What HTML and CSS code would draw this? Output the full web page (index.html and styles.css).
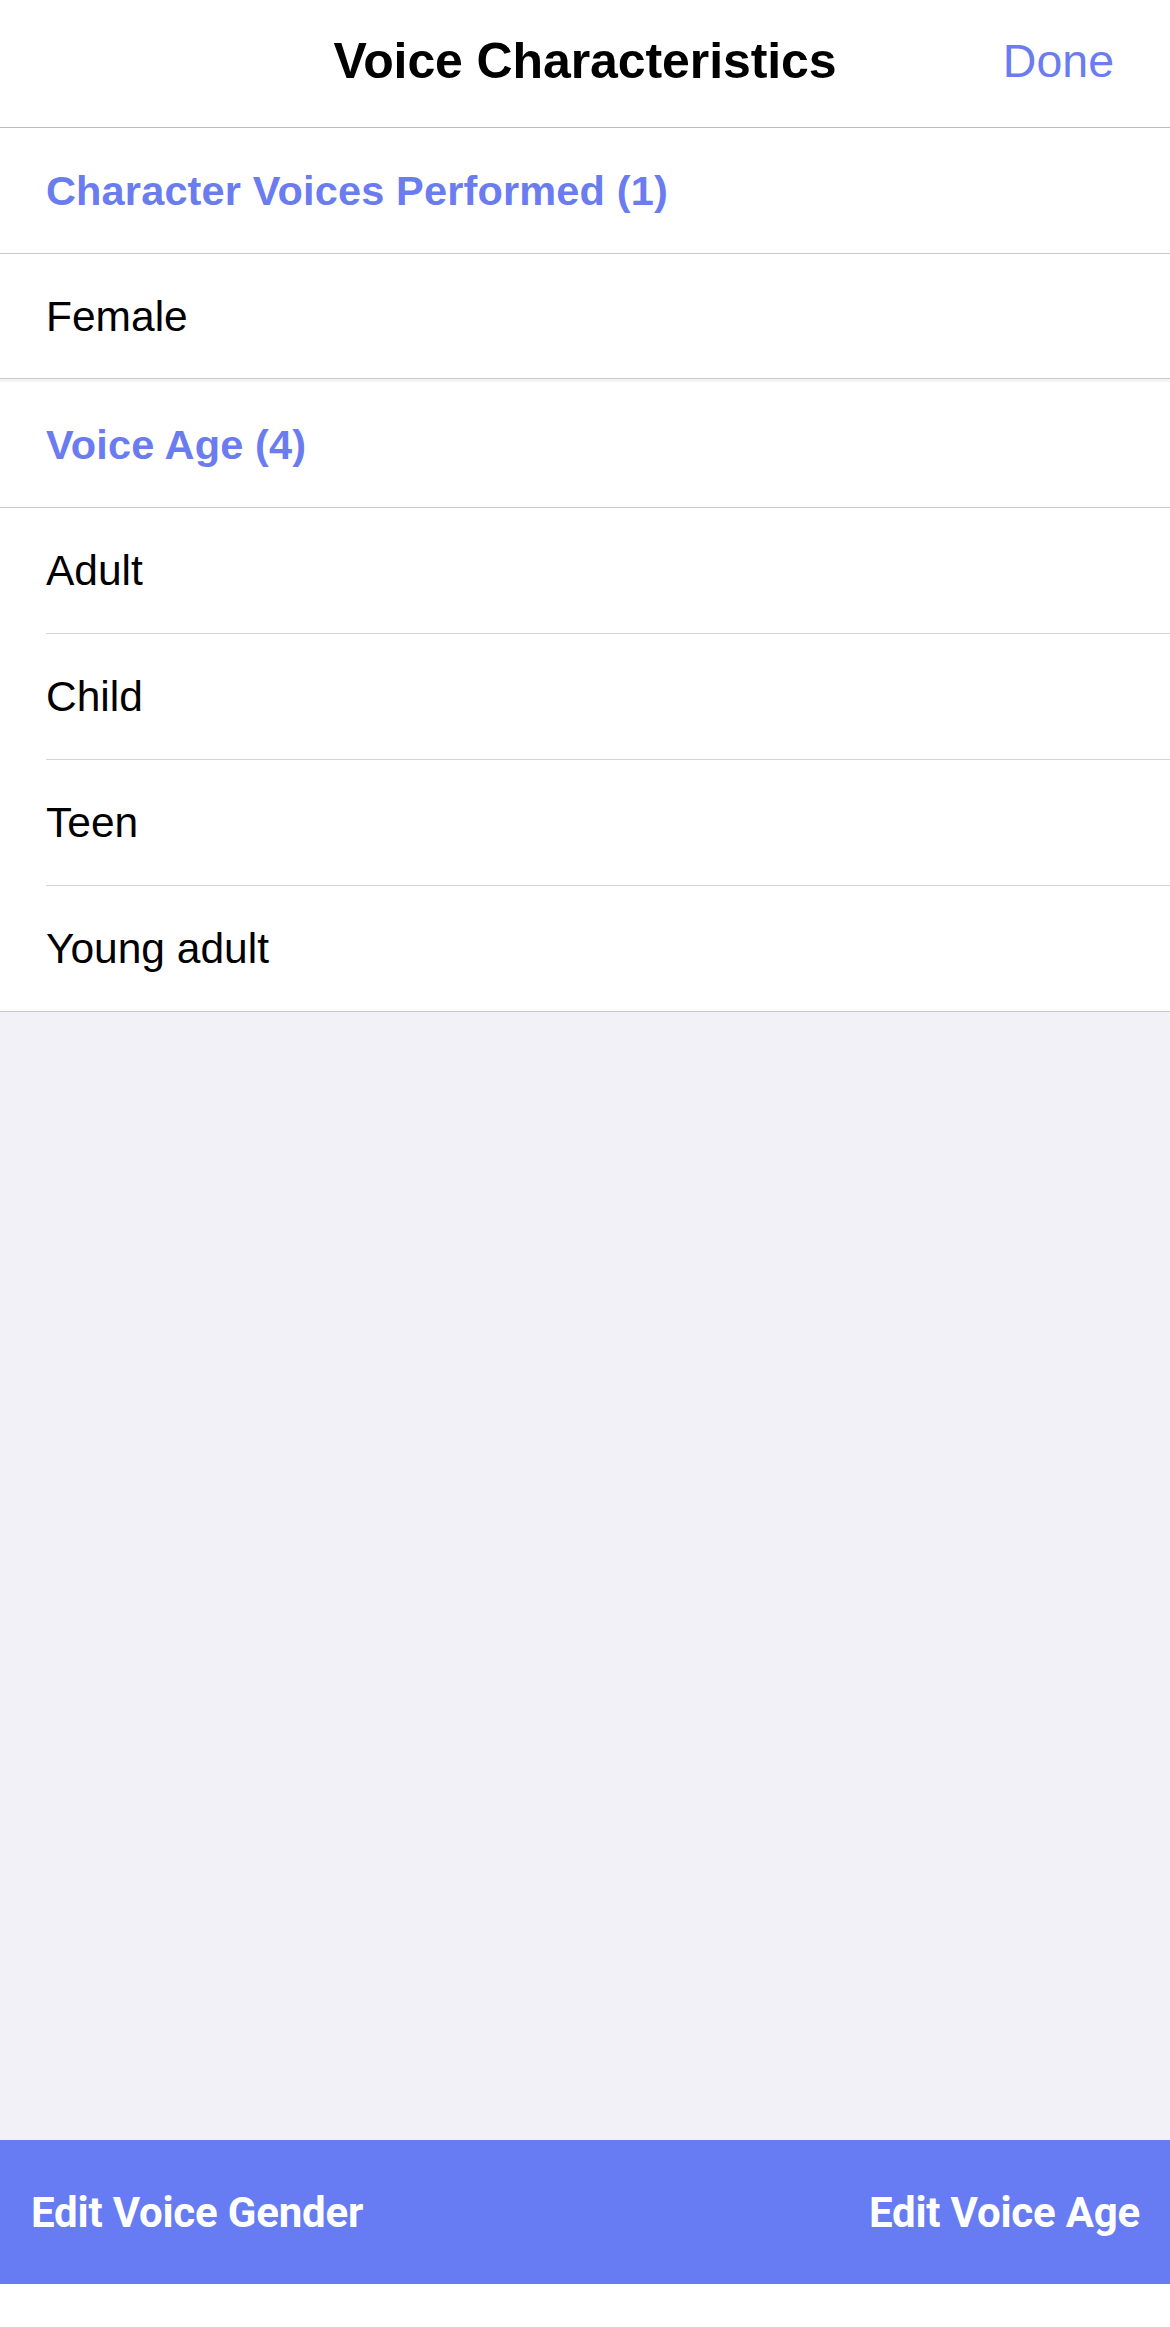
FILE: index.html
```html
<!DOCTYPE html>
<html lang="en">
<head>
<meta charset="utf-8">
<title>Voice Characteristics</title>
<link rel="stylesheet" href="styles.css">
</head>
<body>
<div class="screen">
  <header class="nav">
    <div class="nav-side"></div>
    <h1 class="nav-title">Voice Characteristics</h1>
    <div class="nav-side nav-right"><span class="nav-done">Done</span></div>
  </header>

  <section class="group">
    <div class="section-head">Character Voices Performed (1)</div>
    <ul class="list">
      <li class="row">Female</li>
    </ul>
  </section>

  <div class="group-gap"></div>

  <section class="group">
    <div class="section-head">Voice Age (4)</div>
    <ul class="list">
      <li class="row">Adult</li>
      <li class="row">Child</li>
      <li class="row">Teen</li>
      <li class="row">Young adult</li>
    </ul>
  </section>

  <div class="filler"></div>

  <footer class="toolbar">
    <span class="toolbar-btn">Edit Voice Gender</span>
    <span class="toolbar-btn">Edit Voice Age</span>
  </footer>
  <div class="home-area"></div>
</div>
</body>
</html>
```

FILE: styles.css
```css
* { box-sizing: border-box; }

html, body {
  margin: 0;
  padding: 0;
  background: #ffffff;
}

body {
  font-family: "Liberation Sans", Arial, sans-serif;
  color: #000000;
}

.screen {
  width: 1170px;
  height: 2327px;
  display: flex;
  flex-direction: column;
  background: #ffffff;
}

.nav {
  height: 128px;
  flex: 0 0 128px;
  display: flex;
  align-items: center;
  border-bottom: 1px solid #b9b9bd;
  padding: 0 56px 6px 56px;
}

.nav-side {
  flex: 1 1 0;
  display: flex;
}

.nav-right {
  justify-content: flex-end;
}

.nav-title {
  margin: 0;
  font-size: 50px;
  font-weight: 700;
  letter-spacing: -0.1px;
  white-space: nowrap;
  color: #000;
}

.nav-done {
  font-size: 46.5px;
  color: #6a7cef;
}

.group {
  background: #ffffff;
}

.section-head {
  height: 126px;
  display: flex;
  align-items: center;
  padding: 0 46px 0;
  font-size: 41.5px;
  font-weight: 700;
  letter-spacing: 0.15px;
  color: #6a7cef;
  border-bottom: 1px solid #c8c8cc;
}

.list {
  list-style: none;
  margin: 0;
  padding: 0;
  border-bottom: 1px solid #c8c8cc;
}

.row {
  margin-left: 46px;
  height: 126px;
  display: flex;
  align-items: center;
  padding-top: 1px;
  font-size: 42.5px;
  color: #000;
  border-bottom: 1px solid #d4d4d8;
}

.row:last-child {
  border-bottom: none;
  height: 125px;
}

.group:first-of-type .row {
  height: 124px;
}

.group-gap {
  height: 3px;
  flex: 0 0 3px;
  background: #f4f4f8;
}

.filler {
  flex: 1 1 auto;
  background: #f2f1f7;
}

.toolbar {
  flex: 0 0 144px;
  height: 144px;
  background: #677bf3;
  display: flex;
  align-items: center;
  justify-content: space-between;
  padding: 0 30px 0 31px;
}

.toolbar-btn {
  font-family: Roboto, "Liberation Sans", sans-serif;
  font-weight: 700;
  font-size: 42px;
  color: #ffffff;
  letter-spacing: -0.2px;
}

.home-area {
  flex: 0 0 43px;
  height: 43px;
  background: #ffffff;
}
```
